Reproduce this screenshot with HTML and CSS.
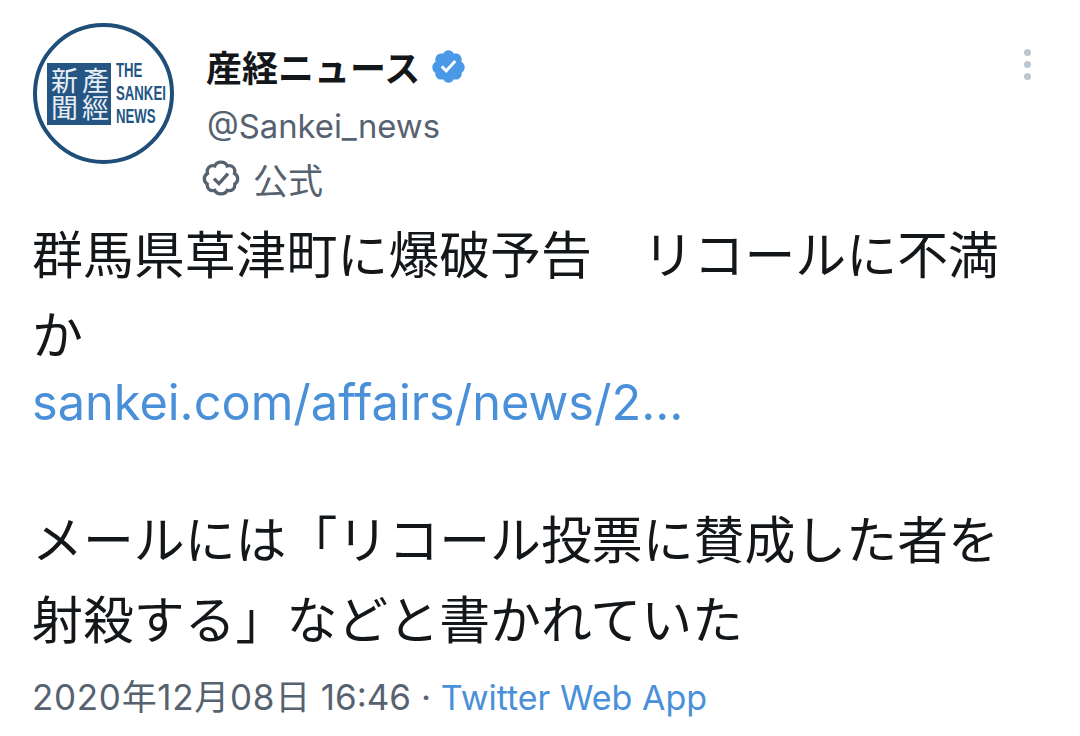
FILE: index.html
```html
<!DOCTYPE html>
<html lang="ja">
<head>
<meta charset="utf-8">
<title>産経ニュース</title>
<link rel="stylesheet" href="styles.css">
</head>
<body>
<main class="tweet">
  <header class="head">
    <div class="avatar">
      <div class="seal">產經<br>新聞</div>
      <div class="brand"><span>THE</span><span>SANKEI</span><span>NEWS</span></div>
    </div>
    <div class="who">
      <div class="name-row">
        <span class="name">産経ニュース</span>
        <svg class="verified" viewBox="0 0 24 24"><path fill="#4a99e9" d="M22.5 12.5c0-1.58-.875-2.95-2.148-3.6.154-.435.238-.905.238-1.4 0-2.21-1.71-3.998-3.818-3.998-.47 0-.92.084-1.336.25C14.818 2.415 13.51 1.5 12 1.5s-2.816.917-3.437 2.25c-.415-.165-.866-.25-1.336-.25-2.11 0-3.818 1.79-3.818 4 0 .494.083.964.237 1.4-1.272.65-2.147 2.018-2.147 3.6 0 1.495.782 2.798 1.942 3.486-.02.17-.032.34-.032.514 0 2.21 1.708 4 3.818 4 .47 0 .92-.086 1.335-.25.62 1.334 1.926 2.25 3.437 2.25 1.512 0 2.818-.916 3.437-2.25.415.163.865.248 1.336.248 2.11 0 3.818-1.79 3.818-4 0-.174-.012-.344-.033-.513 1.158-.687 1.943-1.99 1.943-3.484z"/><path fill="#fff" d="M10.54 16.2l-3.6-3.6 1.34-1.34 2.2 2.2 5.24-5.7 1.4 1.28z"/></svg>
      </div>
      <div class="handle">@Sankei_news</div>
      <div class="official">
        <svg class="badge" viewBox="0 0 24 24"><path fill="none" stroke="#56626f" stroke-width="2" d="M22 12.500c0-1.400-.8-2.600-1.900-3.200.1-.4.2-.8.2-1.200 0-2-1.500-3.500-3.400-3.500-.4 0-.8.100-1.200.200C15.200 3.500 13.800 2.500 12 2.500s-3.200 1-3.700 2.300c-.4-.1-.8-.2-1.200-.2-1.900 0-3.400 1.500-3.400 3.500 0 .4.100.8.200 1.200C2.800 9.900 2 11.100 2 12.500c0 1.300.7 2.500 1.700 3.100v.5c0 2 1.500 3.500 3.400 3.500.4 0 .8-.1 1.200-.2.500 1.200 2 2.100 3.700 2.100s3.200-.9 3.700-2.100c.4.100.8.200 1.200.200 1.900 0 3.400-1.500 3.400-3.500v-.5c1-.6 1.700-1.800 1.700-3.100z"/><path fill="none" stroke="#56626f" stroke-width="2" d="M7.800 12.400l3 3 5.400-6"/></svg>
        <span>公式</span>
      </div>
    </div>
    <div class="more"><i></i><i></i><i></i></div>
  </header>
  <div class="body">
    <p>群馬県草津町に爆破予告　リコールに不満<br>か</p>
    <p class="link">sankei.com/affairs/news/2…</p>
    <p class="gap">メールには「リコール投票に賛成した者を<br>射殺する」などと書かれていた</p>
  </div>
  <footer class="meta"><span class="date">2020年12月08日</span> 16:46 · <span class="app">Twitter Web App</span></footer>
</main>
</body>
</html>
```
FILE: styles.css
```css
* { box-sizing: border-box; }
html, body { margin: 0; padding: 0; background: #fff; }
body {
  width: 1080px;
  height: 736px;
  overflow: hidden;
  font-family: "Noto Sans CJK JP", sans-serif;
  color: #14171a;
}
.tweet { padding: 20px 33px 0 32px; }
.head { display: flex; align-items: flex-start; }
.avatar {
  width: 141px;
  height: 141px;
  margin: 3px 0 0 1px;
  flex: none;
  border: 4px solid #1f4e79;
  border-radius: 50%;
  display: flex;
  align-items: center;
  padding-left: 10px;
  gap: 5px;
  background: #fff;
}
.seal {
  flex: none;
  width: 64px;
  height: 62px;
  background: #245583;
  color: #e8eef4;
  font-size: 27px;
  line-height: 31px;
  writing-mode: vertical-rl;
  text-align: center;
  font-weight: 400;
}
.brand {
  display: flex;
  flex-direction: column;
  font-family: "Liberation Sans", sans-serif;
  font-weight: 700;
  font-size: 20px;
  line-height: 23px;
  color: #245583;
  transform: scaleX(0.66);
  transform-origin: left center;
}
.who { margin-left: 32px; flex: 1; }
.name-row { display: flex; align-items: center; height: 56px; margin-top: 18px; }
.name { font-size: 36px; font-weight: 700; line-height: 56px; }
.verified { width: 37px; height: 37px; margin-left: 10px; }
.handle {
  font-family: Inter, sans-serif;
  font-size: 32.800px;
  line-height: 46px;
  margin-top: 9px;
  margin-left: 1px;
  color: #56626f;
}
.official { display: flex; align-items: center; height: 54px; margin-top: 2px; margin-left: -5px; color: #56626f; font-size: 35px; font-weight: 400; }
.badge { width: 40px; height: 40px; margin-right: 12px; }
.more { display: flex; flex-direction: column; gap: 5px; margin-top: 29px; margin-right: 16px; }
.more i { width: 7px; height: 7px; border-radius: 50%; background: #bcc6d0; display: block; }
.body { margin-top: 7px; font-size: 50.900px; line-height: 80px; font-weight: 400; }
.body p { margin: 0; white-space: nowrap; }
.body .link { font-family: Inter, sans-serif; font-weight: 400; font-size: 48.700px; color: #4a90d9; line-height: 62px; }
.body .gap { margin-top: 63px; }
.meta { margin-top: 15px; font-family: Inter, "Noto Sans CJK JP", sans-serif; font-size: 35px; line-height: 50px; color: #56626f; white-space: nowrap; }
.date { letter-spacing: 0.700px; }
.app { color: #4a90d9; font-size: 34px; }
```
